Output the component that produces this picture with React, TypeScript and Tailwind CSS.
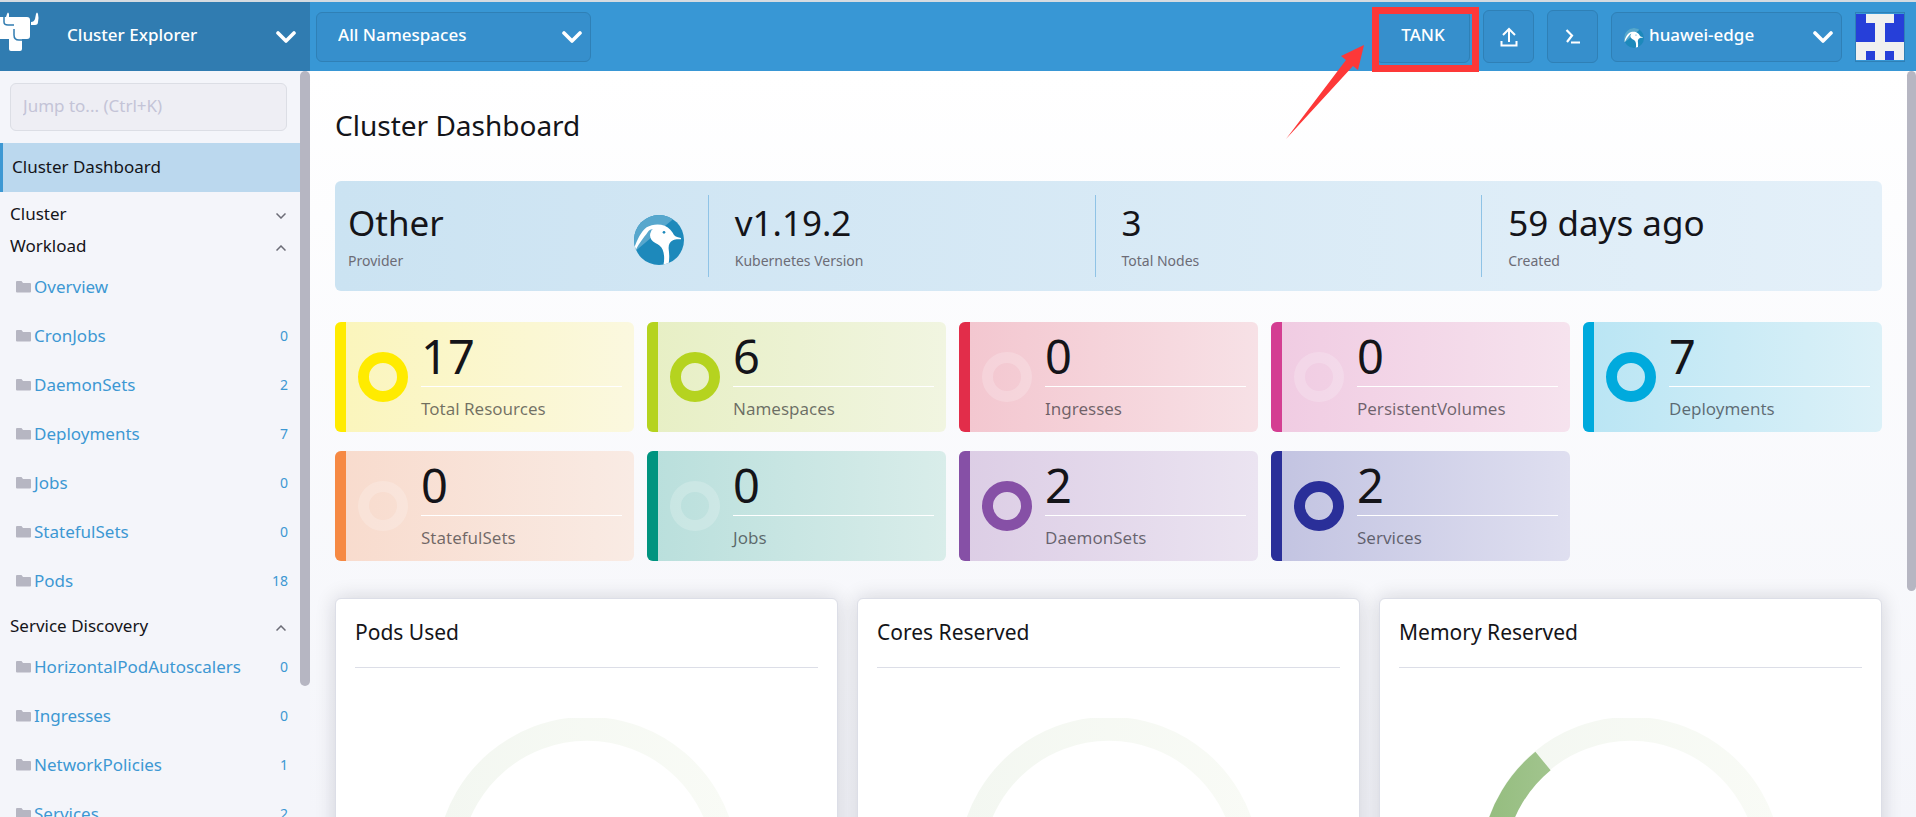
import React from "react";

type NavItem = { label: string; count?: number };
type NavGroup = { label: string; open: boolean; items: NavItem[] };

const groups: NavGroup[] = [
  { label: "Cluster", open: false, items: [] },
  {
    label: "Workload",
    open: true,
    items: [
      { label: "Overview" },
      { label: "CronJobs", count: 0 },
      { label: "DaemonSets", count: 2 },
      { label: "Deployments", count: 7 },
      { label: "Jobs", count: 0 },
      { label: "StatefulSets", count: 0 },
      { label: "Pods", count: 18 },
    ],
  },
  {
    label: "Service Discovery",
    open: true,
    items: [
      { label: "HorizontalPodAutoscalers", count: 0 },
      { label: "Ingresses", count: 0 },
      { label: "NetworkPolicies", count: 1 },
      { label: "Services", count: 2 },
    ],
  },
];

type Count = { label: string; value: number; bar: string; fill: string; ring: string };

const counts: Count[] = [
  { label: "Total Resources", value: 17, bar: "bg-[#ffeb00]", fill: "from-[#fbf5bb] to-[#fbf8df]", ring: "border-[#ffeb00]" },
  { label: "Namespaces", value: 6, bar: "bg-[#b5d31f]", fill: "from-[#e7efc4] to-[#f1f5e1]", ring: "border-[#b5d31f]" },
  { label: "Ingresses", value: 0, bar: "bg-[#e22d4a]", fill: "from-[#f3c6cf] to-[#f7e1e6]", ring: "border-white/20" },
  { label: "PersistentVolumes", value: 0, bar: "bg-[#d43e92]", fill: "from-[#f0cbe2] to-[#f6e3ee]", ring: "border-white/20" },
  { label: "Deployments", value: 7, bar: "bg-[#00aadd]", fill: "from-[#b9e5f4] to-[#dcf1f8]", ring: "border-[#00aadd]" },
  { label: "StatefulSets", value: 0, bar: "bg-[#f68943]", fill: "from-[#f8dbcd] to-[#f9ebe4]", ring: "border-white/20" },
  { label: "Jobs", value: 0, bar: "bg-[#009480]", fill: "from-[#b9dfdc] to-[#d9edea]", ring: "border-white/20" },
  { label: "DaemonSets", value: 2, bar: "bg-[#8650a6]", fill: "from-[#dccde5] to-[#ebe4f1]", ring: "border-[#8650a6]" },
  { label: "Services", value: 2, bar: "bg-[#2a2f99]", fill: "from-[#c2c3e1] to-[#dfdff0]", ring: "border-[#2a2f99]" },
];

const facts = [
  { value: "Other", label: "Provider", logo: true },
  { value: "v1.19.2", label: "Kubernetes Version" },
  { value: "3", label: "Total Nodes" },
  { value: "59 days ago", label: "Created" },
];

const gauges = [
  { title: "Pods Used", filled: false },
  { title: "Cores Reserved", filled: false },
  { title: "Memory Reserved", filled: true },
];

function GooseLogo({ className }: { className: string }) {
  const id = React.useId();
  return (
    <svg viewBox="0 0 150 150" className={className} aria-hidden="true">
      <clipPath id={id}>
        <circle cx="75" cy="75" r="75" />
      </clipPath>
      <g clipPath={`url(#${id})`}>
        <rect width="150" height="150" fill="#1d89bb" />
        <path d="M0 0H132L0 112Z" fill="#57a7cd" />
        <path
          d="M-2 106C8 78 20 50 38 37C52 28 74 25 92 32C106 38 114 48 120 60C125 66 133 67 141 69V73C132 73 124 72 117 76C107 81 103 90 104 102C106 118 107 132 103 152H88C92 134 91 116 86 104C82 95 74 88 64 84C50 78 44 62 51 50C52 46 54 44 58 43C52 41 46 44 42 50C28 70 16 82 4 108Z"
          fill="#fff"
        />
        <circle cx="90" cy="52" r="4" fill="#1d89bb" />
      </g>
    </svg>
  );
}

function BullLogo() {
  return (
    <svg viewBox="0 10 40 54" className="h-[54px] w-10 shrink-0" fill="#fff" aria-hidden="true">
      <path d="M0 17H27Q30 17 30 20V36Q30 39 27 39H22V49Q22 51 20 51H11Q9 51 9 49V39H0Z" />
      <path d="M31 25V22Q34 22 35 19L36 14Q37 11 38 14Q39 18 38 22Q38 25 35 25Z" />
      <path d="M4 16V22Q4 25 8 25H14M14 29V35Q14 40 19 40H28" fill="none" stroke="#307cb1" strokeWidth="1.5" />
      <path d="M5 20L7 14Q8 11 9 14V20Q9 22 11 22H15V24H8Q5 24 5 20Z" />
    </svg>
  );
}

function BoldChevron() {
  return (
    <svg viewBox="0 0 20 12" className="pointer-events-none absolute right-2 top-1/2 h-3 w-5 -translate-y-1/2" fill="none" stroke="#fff" strokeWidth="3.6" strokeLinecap="round" strokeLinejoin="round" aria-hidden="true">
      <path d="M2 2L10 10L18 2" />
    </svg>
  );
}

function HeaderSelect({ label, option, className }: { label: string; option: string; className: string }) {
  return (
    <select
      aria-label={label}
      className={`h-full w-full appearance-none text-[17px] font-medium text-white outline-none ${className}`}
    >
      <option>{option}</option>
    </select>
  );
}

function Avatar() {
  const cells = ["10001", "11011", "11011", "00000", "01010"];
  return (
    <svg viewBox="0 0 5 5" shapeRendering="crispEdges" preserveAspectRatio="none" className="h-full w-full" aria-hidden="true">
      <rect width="5" height="5" fill="#f0f0f0" />
      {cells.map((row, y) =>
        row.split("").map((c, x) => (c === "1" ? <rect key={`${x}-${y}`} x={x} y={y} width="1" height="1" fill="#263fd9" /> : null)),
      )}
    </svg>
  );
}

function Header() {
  return (
    <header className="flex h-[71px] shrink-0 border-t-2 border-[#d5dbe1] bg-[#3897d5]">
      <div className="relative flex w-[310px] shrink-0 items-center bg-[#307cb1]">
        <BullLogo />
        <div className="absolute inset-0 pb-1">
          <HeaderSelect label="Area" option="Cluster Explorer" className="pl-[67px]" />
        </div>
        <div className="absolute inset-y-0 right-[6px]">
          <BoldChevron />
        </div>
      </div>
      <div className="flex min-w-0 flex-1 items-center gap-[13px] pl-[6px] pr-[11px]">
        <div className="relative h-[50px] w-[275px] rounded-md border border-[#2f80b6] bg-[#368fcc] pb-1">
          <HeaderSelect label="Namespace filter" option="All Namespaces" className="pl-[21px]" />
          <BoldChevron />
        </div>
        <div className="relative ml-auto h-[53px] w-[94px]">
          <button className="h-full w-full rounded-md border border-[#2f80b6] bg-[#368fcc] pb-1 text-[17px] font-medium text-white">
            TANK
          </button>
          <div className="pointer-events-none absolute -bottom-[9px] -left-1 -right-[9px] -top-[3px] border-[7px] border-[#fd3838]" />
          <svg viewBox="0 0 78 94" className="pointer-events-none absolute -left-[90px] top-[35px] z-10 h-[94px] w-[78px]" aria-hidden="true">
            <path d="M78 0L55 11L60 15L0 94L67 21L72 25Z" fill="#fd3838" />
          </svg>
        </div>
        <button aria-label="Import YAML" className="flex h-[53px] w-[51px] items-center justify-center rounded-md border border-[#2f80b6] bg-[#368fcc]">
          <svg viewBox="0 0 18 20" className="h-5 w-[18px]" fill="none" stroke="#fff" strokeWidth="2" aria-hidden="true">
            <path d="M9 15V2M3 8L9 2L15 8M1.500 14V18.500H16.500V14" />
          </svg>
        </button>
        <button aria-label="Kubectl shell" className="flex h-[53px] w-[51px] items-center justify-center rounded-md border border-[#2f80b6] bg-[#368fcc]">
          <svg viewBox="0 0 16 16" className="h-4 w-4" fill="none" stroke="#fff" strokeWidth="2.200" aria-hidden="true">
            <path d="M1.500 1L7 6.500L2 13M6 13.500H15" />
          </svg>
        </button>
        <div className="relative h-[50px] w-[231px] rounded-md border border-[#2f80b6] bg-[#368fcc] pb-1">
          <GooseLogo className="pointer-events-none absolute left-3 top-[15px] h-5 w-5" />
          <HeaderSelect label="Cluster" option="huawei-edge" className="pl-[37px]" />
          <BoldChevron />
        </div>
        <button aria-label="User menu" className="h-[50px] w-[50px] shrink-0 border border-[#2f80b6] bg-[#3897d5] py-px">
          <Avatar />
        </button>
      </div>
    </header>
  );
}

function Sidebar() {
  return (
    <aside className="flex w-[310px] shrink-0 bg-[#f4f5fa]">
      <nav className="min-w-0 flex-1 overflow-hidden">
        <div className="pb-3 pl-[10px] pr-[13px] pt-3">
          <input
            aria-label="Jump to"
            placeholder="Jump to... (Ctrl+K)"
            className="block h-12 w-full rounded-md border border-[#dcdee5] bg-[#eeeef4] pb-1 pl-3 text-[17px] outline-none placeholder:text-[#c4c4d7]"
          />
        </div>
        <a href="#dashboard" className="flex h-[49px] items-center border-l-[3px] border-[#3d98d3] bg-[#bbd8ee] pb-[2px] pl-[9px] text-[17px]">
          Cluster Dashboard
        </a>
        <div className="pt-[6px]">
          {groups.map((g) => (
            <section key={g.label} className={g.open ? "pb-[5px]" : ""}>
              <button aria-expanded={g.open} className="flex h-8 w-full items-center justify-between pl-[10px] pr-[14px] text-[17px]">
                {g.label}
                <svg viewBox="0 0 10 6" className="mt-1 h-[6px] w-[10px]" fill="none" stroke="#6c6c76" strokeWidth="1.500" aria-hidden="true">
                  <path d={g.open ? "M.5 5.500L5 1L9.500 5.500" : "M.5 .5L5 5L9.500 .5"} />
                </svg>
              </button>
              {g.items.length > 0 && (
                <ul>
                  {g.items.map((item) => (
                    <li key={item.label}>
                      <a href={`#${item.label}`} className="flex h-[49px] items-center pl-4 pr-3 text-[17px] text-[#3d98d3]">
                        <svg viewBox="0 0 15 12" className="mr-[3px] h-3 w-[15px]" fill="#b6b6c2" aria-hidden="true">
                          <path d="M1 0H5.500L7 2H14Q15 2 15 3V10.500Q15 11.500 14 11.500H1Q0 11.500 0 10.500V1Q0 0 1 0Z" />
                        </svg>
                        <span className="flex-1">{item.label}</span>
                        {item.count !== undefined && <span className="text-sm">{item.count}</span>}
                      </a>
                    </li>
                  ))}
                </ul>
              )}
            </section>
          ))}
        </div>
      </nav>
      <div className="w-[10px] shrink-0">
        <div className="h-[615px] rounded-full bg-[#b6b6c2]" />
      </div>
    </aside>
  );
}

function Gauge({ filled }: { filled: boolean }) {
  const id = React.useId();
  return (
    <svg viewBox="0 0 302 240" className="mx-auto h-[240px] w-[302px]" fill="none" strokeWidth="24" aria-hidden="true">
      <defs>
        <linearGradient id={id} gradientUnits="userSpaceOnUse" x1="0" y1="0" x2="302" y2="0">
          <stop offset="0" stopColor="#93bc7d" />
          <stop offset="1" stopColor="#d0e0c4" />
        </linearGradient>
        <linearGradient id={`${id}t`} gradientUnits="userSpaceOnUse" x1="0" y1="0" x2="302" y2="0">
          <stop offset="0" stopColor="#f3f7f1" />
          <stop offset="1" stopColor="#f9fbf6" />
        </linearGradient>
      </defs>
      <path d="M31 220A139 139 0 1 1 271 220" stroke={`url(#${id}t)`} />
      {filled && <path d="M31 220A139 139 0 0 1 63 43" stroke={`url(#${id})`} />}
    </svg>
  );
}

function Dashboard() {
  return (
    <main className="flex min-w-0 flex-1 bg-gradient-to-b from-white to-[#f4f5fa]">
      <div className="min-w-0 flex-1 overflow-hidden pl-[25px] pr-[25px] pt-[35px]">
        <h1 className="text-[28px] leading-[38px]">Cluster Dashboard</h1>

        <div className="mt-[37px] grid grid-cols-4 rounded-md bg-gradient-to-r from-[#cbe3f2] to-[#e4f0f9] py-[14px]">
          {facts.map((f, i) => (
            <div key={f.label} className="px-[13px]">
              <div className={`flex h-[82px] items-center justify-between ${i < 3 ? "border-r border-[#8fc3e6] pr-6" : ""}`}>
                <div>
                  <div className="text-[35px] leading-[44px]">{f.value}</div>
                  <div className="mt-[6px] text-sm leading-5 text-[#6c6c76]">{f.label}</div>
                </div>
                {f.logo && <GooseLogo className="mb-3 h-[50px] w-[50px] self-end" />}
              </div>
            </div>
          ))}
        </div>

        <div className="mt-[31px] grid grid-cols-5 gap-x-[13px] gap-y-[19px]">
          {counts.map((c) => (
            <div key={c.label} className={`flex h-[110px] overflow-hidden rounded-md bg-gradient-to-r ${c.fill}`}>
              <div className={`w-[11px] shrink-0 ${c.bar}`} />
              <div className={`ml-3 h-[50px] w-[50px] shrink-0 self-center rounded-full border-[11px] ${c.ring}`} />
              <div className="ml-[13px] mr-3 min-w-0 flex-1 pt-[6px]">
                <div className="border-b border-white pb-[2px] text-[47px] leading-[56px]">{c.value}</div>
                <div className="mt-[10px] text-[17px] leading-6 text-[#141419]/60">{c.label}</div>
              </div>
            </div>
          ))}
        </div>

        <div className="mt-[37px] grid grid-cols-3 gap-[19px]">
          {gauges.map((g) => (
            <section key={g.title} className="rounded-md border border-[#dcdee7] bg-white px-[19px] pt-[19px] shadow-[0_0_20px_rgba(20,20,40,0.16)]">
              <h2 className="border-b border-[#dcdee7] pb-[21px] text-[21px] leading-7">{g.title}</h2>
              <div className="pt-[50px]">
                <Gauge filled={g.filled} />
              </div>
            </section>
          ))}
        </div>
      </div>
      <div className="w-[9px] shrink-0">
        <div className="h-[520px] rounded-full bg-[#b6b6c2]" />
      </div>
    </main>
  );
}

export default function App() {
  return (
    <div className="flex h-screen flex-col overflow-hidden font-['Noto_Sans',sans-serif] text-[#141419]">
      <Header />
      <div className="flex min-h-0 flex-1">
        <Sidebar />
        <Dashboard />
      </div>
    </div>
  );
}
